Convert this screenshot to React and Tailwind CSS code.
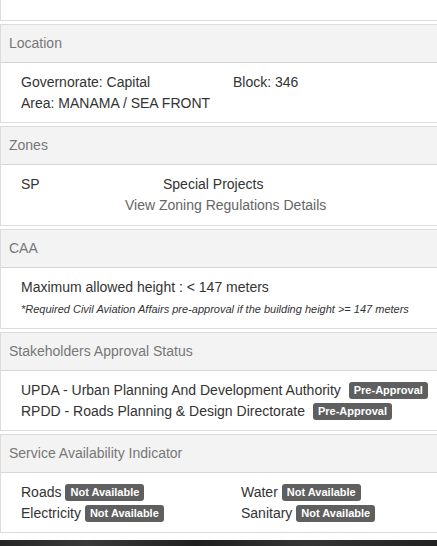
import React from 'react';

const Badge = ({ children }) => (
  <span className="inline-block ml-[4px] px-[5px] h-[17px] leading-[17px] rounded-[3px] bg-[#5f5f5f] text-white text-[11px] font-bold align-[1px]">
    {children}
  </span>
);

const Panel = ({ title, body = 'h-[60px]', children }) => (
  <div className="border border-[#dcdcdc] bg-white mt-[3px]">
    <div className="h-[38px] flex items-center px-[8px] bg-[#f3f3f3] border-b border-[#d6d6d6] text-[14px] text-[#777]">
      {title}
    </div>
    <div className={`${body} pt-[9px] pl-[20px] text-[14px] leading-[21px] text-[#333]`}>
      {children}
    </div>
  </div>
);

const App = () => {
  return (
    <div className="w-[437px] h-[546px] overflow-hidden bg-white flex flex-col" style={{ fontFamily: '"Liberation Sans", Arial, sans-serif' }}>
      <div className="w-[440px]">
        <div className="h-[21px] border border-t-0 border-[#dcdcdc] bg-white" />

        <Panel title="Location" body="h-[59px]">
          <div className="flex">
            <span className="w-[212px]">Governorate: Capital</span>
            <span>Block: 346</span>
          </div>
          <div>Area: MANAMA / SEA FRONT</div>
        </Panel>

        <Panel title="Zones">
          <div className="flex">
            <span className="w-[142px]">SP</span>
            <span>Special Projects</span>
          </div>
          <div className="pl-[104px] text-[#666]">View Zoning Regulations Details</div>
        </Panel>

        <Panel title="CAA">
          <div>Maximum allowed height : &lt; 147 meters</div>
          <div className="text-[11px] italic leading-[22px] text-[#333]">
            *Required Civil Aviation Affairs pre-approval if the building height &gt;= 147 meters
          </div>
        </Panel>

        <Panel title="Stakeholders Approval Status" body="h-[59px]">
          <div>
            UPDA - Urban Planning And Development Authority <Badge>Pre-Approval</Badge>
          </div>
          <div>
            RPDD - Roads Planning &amp; Design Directorate <Badge>Pre-Approval</Badge>
          </div>
        </Panel>

        <Panel title="Service Availability Indicator" body="h-[59px]">
          <div className="flex">
            <span className="w-[220px]">Roads<Badge>Not Available</Badge></span>
            <span>Water<Badge>Not Available</Badge></span>
          </div>
          <div className="flex">
            <span className="w-[220px]">Electricity<Badge>Not Available</Badge></span>
            <span>Sanitary<Badge>Not Available</Badge></span>
          </div>
        </Panel>
      </div>
      <div className="mt-auto h-[6px] bg-[linear-gradient(90deg,#262626,#3a3a3a_20%,#1f1f1f_45%,#353535_70%,#222)]" />
    </div>
  );
};

export default App;
